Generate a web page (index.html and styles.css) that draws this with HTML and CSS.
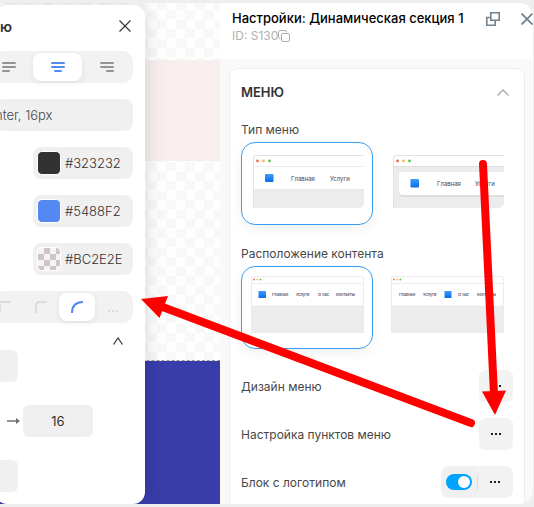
FILE: index.html
```html
<!DOCTYPE html>
<html lang="ru">
<head>
  <meta charset="UTF-8" />
  <meta name="viewport" content="width=device-width, initial-scale=1" />
  <title>Настройки: Динамическая секция 1</title>
  <link rel="stylesheet" href="styles.css">
</head>
<body>
  <div class="editor">
    <div class="canvas">
      <div class="canvas-top"></div>
      <div class="canvas-pink"></div>
      <div class="canvas-empty"></div>
      <div class="canvas-blue"></div>
    </div>

    <section class="popup">
      <header class="popup-header">
        <h2>ю</h2>
        <button class="icon-btn" aria-label="Закрыть">
          <svg width="12" height="12" viewBox="0 0 12 12" stroke="#323232" stroke-width="1.1"><path d="M0.5 0.5L11.5 11.5M11.5 0.5L0.5 11.5"/></svg>
        </button>
      </header>

      <div class="segment">
        <label class="segment-item">
          <input type="radio" name="align" aria-label="По левому краю">
          <svg width="14" height="10" viewBox="0 0 14 10"><path d="M1 1H13M1 5H13M1 9H7"/></svg>
        </label>
        <label class="segment-item">
          <input type="radio" name="align" aria-label="По центру" checked>
          <svg width="14" height="10" viewBox="0 0 14 10"><path d="M1 1H13M1 5H13M4 9H10"/></svg>
        </label>
        <label class="segment-item">
          <input type="radio" name="align" aria-label="По правому краю">
          <svg width="14" height="10" viewBox="0 0 14 10"><path d="M1 1H13M1 5H13M7 9H13"/></svg>
        </label>
      </div>

      <button class="font-btn">nter, 16px</button>

      <button class="color-btn"><span class="swatch swatch-dark"></span>#323232</button>
      <button class="color-btn"><span class="swatch swatch-blue"></span>#5488F2</button>
      <button class="color-btn"><span class="swatch swatch-clear"></span>#BC2E2E</button>

      <div class="segment segment-corners">
        <label class="segment-item corner">
          <input type="radio" name="corner" aria-label="Без скругления">
          <svg width="12" height="12" viewBox="0 0 12 12"><path d="M1 12V1H12"/></svg>
        </label>
        <label class="segment-item corner">
          <input type="radio" name="corner" aria-label="Малое скругление">
          <svg width="12" height="12" viewBox="0 0 12 12"><path d="M1 12V5Q1 1 5 1H12"/></svg>
        </label>
        <label class="segment-item corner">
          <input type="radio" name="corner" aria-label="Большое скругление" checked>
          <svg width="12" height="12" viewBox="0 0 12 12"><path d="M1 12C1 5 5 1 12 1"/></svg>
        </label>
        <label class="segment-item corner">
          <input type="radio" name="corner" aria-label="Другое">
          <svg width="12" height="12" viewBox="0 0 12 12"><path stroke-dasharray="2 2" d="M1 10H11"/></svg>
        </label>
      </div>

      <button class="icon-btn collapse" aria-label="Свернуть">
        <svg width="10" height="8" viewBox="0 0 10 8" fill="none" stroke="#323232" stroke-width="1.2"><path d="M0.5 7.5L5 1L9.5 7.5"/></svg>
      </button>

      <input class="num-input short" type="text" aria-label="Отступ сверху">
      <div class="num-row">
        <svg width="13" height="8" viewBox="0 0 13 8" fill="#707070"><path d="M0 3.2H9V1L13 4L9 7V4.8H0Z"/></svg>
        <input class="num-input" type="text" value="16" aria-label="Отступ справа">
      </div>
      <input class="num-input short" type="text" aria-label="Отступ снизу">
    </section>

    <aside class="panel">
      <header class="panel-header">
        <div class="panel-title">
          <h1>Настройки: Динамическая секция 1</h1>
          <p>ID: S130<button class="icon-btn" aria-label="Копировать">
            <svg width="12" height="12" viewBox="0 0 12 12" fill="none" stroke="#b0b0b0"><rect x="3.5" y="3.5" width="8" height="8" rx="1.5"/><path d="M2.5 8.5H2Q0.5 8.5 0.5 7V2Q0.5 0.5 2 0.5H7Q8.5 0.5 8.5 2V2.5"/></svg>
          </button></p>
        </div>
        <div class="panel-actions">
          <button class="icon-btn" aria-label="Открепить">
            <svg width="14" height="14" viewBox="0 0 14 14" fill="none" stroke="#73828f" stroke-width="1.6"><path d="M4.8 0.8H13.2V8.2H4.8Z"/><path d="M4.5 5.5H0.8V13.2H9.2V8.5"/></svg>
          </button>
          <button class="icon-btn" aria-label="Закрыть">
            <svg width="12" height="12" viewBox="0 0 12 12" stroke="#73828f" stroke-width="1.8"><path d="M0.5 0.5L11.5 11.5M11.5 0.5L0.5 11.5"/></svg>
          </button>
        </div>
      </header>

      <div class="panel-body">
        <section class="card">
          <header class="card-header">
            <h2>МЕНЮ</h2>
            <button class="icon-btn" aria-label="Свернуть">
              <svg width="12" height="7" viewBox="0 0 12 7" fill="none" stroke="#a8a8a8" stroke-width="1.3"><path d="M0.5 6.5L6 1L11.5 6.5"/></svg>
            </button>
          </header>

          <h3>Тип меню</h3>
          <div class="options">
            <label class="option option-type">
              <input type="radio" name="type" aria-label="Обычное меню" checked>
              <svg width="111" height="53" viewBox="0 0 111 53">
                <defs>
                  <linearGradient id="logoFill" x1="0" y1="0" x2="0" y2="1">
                    <stop offset="0" stop-color="#3c9cf8"/>
                    <stop offset="1" stop-color="#0a6fe8"/>
                  </linearGradient>
                </defs>
                <path fill="#ececec" d="M0 30H111V47Q111 53 105 53H0Z"/>
                <path fill="#fff" d="M0 0H111V34.5H0Z"/>
                <path fill="none" stroke="#e2e2e2" d="M0.5 53V3Q0.5 0.5 3 0.5H111"/>
                <path stroke="#ededed" d="M1 11.5H111"/>
                <path stroke="#dfdfdf" stroke-opacity=".6" d="M1 34.5H111"/>
                <circle cx="4.5" cy="6" r="1.4" fill="#ee6a5f"/><circle cx="10.5" cy="6" r="1.4" fill="#f5bd4f"/><circle cx="16.5" cy="6" r="1.4" fill="#61c454"/>
                <rect class="logo" x="12" y="19" width="8.5" height="8" rx="1"/>
                <text x="38" y="26">Главная</text><text x="77" y="26">Услуги</text>
              </svg>
            </label>
            <label class="option option-type">
              <input type="radio" name="type" aria-label="Плавающее меню">
              <svg width="111" height="53" viewBox="0 0 111 53">
                <path fill="#ececec" d="M0 11H111V47Q111 53 105 53H0Z"/>
                <path fill="none" stroke="#e2e2e2" d="M0.5 53V3Q0.5 0.5 3 0.5H111"/>
                <path stroke="#dddddd" d="M1 11.5H111"/>
                <path fill="#dedede" d="M111 18H10Q6 18 6 22V38Q6 42 10 42H111Z"/>
                <path fill="#fff" d="M111 17H10Q6 17 6 21V36Q6 40 10 40H111Z"/>
                <circle cx="4.5" cy="6" r="1.4" fill="#ee6a5f"/><circle cx="10.5" cy="6" r="1.4" fill="#f5bd4f"/><circle cx="16.5" cy="6" r="1.4" fill="#61c454"/>
                <rect class="logo" x="17.5" y="24" width="8.5" height="8.5" rx="1"/>
                <text x="44" y="31">Главная</text><text x="82" y="31">Услуги</text>
              </svg>
            </label>
          </div>

          <h3>Расположение контента</h3>
          <div class="options">
            <label class="option option-layout">
              <input type="radio" name="layout" aria-label="Логотип слева" checked>
              <svg class="small" width="113" height="57" viewBox="0 0 113 57">
                <path fill="#ececec" d="M0 30H113V57H0Z"/>
                <path fill="#fff" stroke="#ececec" d="M0.5 30V2Q0.5 0.5 2 0.5H111Q112.5 0.5 112.5 2V30Z"/>
                <path stroke="#ededed" d="M1 7.5H112"/>
                <circle cx="3" cy="3.5" r="0.9" fill="#ee6a5f"/><circle cx="6.2" cy="3.5" r="0.9" fill="#f5bd4f"/><circle cx="9.4" cy="3.5" r="0.9" fill="#61c454"/>
                <rect class="logo" x="7.5" y="15" width="7.5" height="7" rx="0.5"/>
                <text x="21" y="20">Главная</text><text x="45" y="20">Услуги</text><text x="67" y="20">О нас</text><text x="85" y="20">Контакты</text>
              </svg>
            </label>
            <label class="option option-layout">
              <input type="radio" name="layout" aria-label="Логотип по центру">
              <svg class="small" width="113" height="57" viewBox="0 0 113 57">
                <path fill="#ececec" d="M0 30H113V57H0Z"/>
                <path fill="#fff" stroke="#ececec" d="M0.5 30V2Q0.5 0.5 2 0.5H111Q112.5 0.5 112.5 2V30Z"/>
                <path stroke="#ededed" d="M1 7.5H112"/>
                <circle cx="3" cy="3.5" r="0.9" fill="#ee6a5f"/><circle cx="6.2" cy="3.5" r="0.9" fill="#f5bd4f"/><circle cx="9.4" cy="3.5" r="0.9" fill="#61c454"/>
                <rect class="logo" x="53.5" y="15" width="7" height="7" rx="0.5"/>
                <text x="8" y="20">Главная</text><text x="32" y="20">Услуги</text><text x="67" y="20">О нас</text><text x="86" y="20">Контакты</text>
              </svg>
            </label>
          </div>

          <div class="row">
            <span>Дизайн меню</span>
            <button class="more-btn" aria-label="Дизайн меню"><i></i><i></i><i></i></button>
          </div>
          <div class="row">
            <span>Настройка пунктов меню</span>
            <button class="more-btn" aria-label="Настройка пунктов меню"><i></i><i></i><i></i></button>
          </div>
          <div class="row">
            <label for="logoToggle">Блок с логотипом</label>
            <div class="toggle-group">
              <input class="toggle" type="checkbox" id="logoToggle" checked>
              <button class="more-btn" aria-label="Блок с логотипом"><i></i><i></i><i></i></button>
            </div>
          </div>
        </section>
      </div>
    </aside>
  </div>

  <!-- pointer arrows over the editor -->
  <svg class="arrows" width="534" height="507" viewBox="0 0 534 507">
    <path d="M483 164L494 394M471 423L160 306" stroke="#f00" stroke-width="8" stroke-linecap="round"/>
    <path d="M482 391.500L506 390.500L495 415ZM141 299L168 296L159.500 318Z" fill="#f00"/>
  </svg>
</body>
</html>
```

FILE: styles.css
```css
* {
  box-sizing: border-box;
}

body {
  font-family: Inter, "Liberation Sans", sans-serif;
  font-size: 13px;
  color: #323232;
  background: #eeeeee;
  margin: 0;
  padding: 3px 1px 3px 0;
  height: 100vh;
  overflow: hidden;
  position: relative;
}

h1, h2, h3, p {
  margin: 0;
}

button, input {
  font: inherit;
  color: inherit;
  border: none;
  margin: 0;
  padding: 0;
}

button {
  cursor: pointer;
}

svg {
  display: block;
}

.icon-btn {
  display: flex;
  background: none;
}

.editor {
  display: grid;
  grid-template-columns: 145px 1fr 313px;
  grid-template-rows: 100%;
  height: 100%;
  border-radius: 0 14px 14px 0;
  overflow: hidden;
}

/* canvas */
.canvas {
  grid-column: 1 / 3;
  grid-row: 1;
  display: flex;
  flex-direction: column;
  background: repeating-conic-gradient(#f8f8f8 0 25%, #fefefe 0 50%) 5px 7px / 19px 19px;
}

.canvas-top {
  height: 57px;
}

.canvas-pink {
  height: 101px;
  background: #f8eeee;
}

.canvas-empty {
  height: 200px;
  border-bottom: 1px dashed #999;
}

.canvas-blue {
  flex: 1;
  background: #383da9;
}

/* popup */
.popup {
  grid-column: 1;
  grid-row: 1;
  justify-self: end;
  width: 150px;
  margin-top: 2px;
  padding: 9px 12px 0 0;
  background: #fff;
  border-radius: 12px;
  box-shadow: 0 0 20px rgb(0 0 0 / 0.15);
  display: flex;
  flex-direction: column;
  align-items: flex-end;
  gap: 16px;
}

.popup-header {
  width: 100%;
  height: 24px;
  margin-bottom: -3px;
  padding: 0 2px 0 5px;
  display: flex;
  align-items: center;
  justify-content: space-between;
}

.popup-header h2 {
  font-size: 14px;
  font-weight: 600;
}

.segment {
  width: 100%;
  height: 32px;
  padding: 2px;
  background: #f2f2f2;
  border-radius: 10px;
  display: flex;
  justify-content: flex-end;
}

.segment-item {
  flex: none;
  width: 49px;
  border-radius: 8px;
  display: flex;
  align-items: center;
  justify-content: center;
}

.segment-item input,
.option input {
  appearance: none;
  width: 0;
  height: 0;
}

.segment-item svg {
  fill: none;
  stroke: #949494;
  stroke-width: 2;
  stroke-linecap: round;
}

.segment-item:has(input:checked) {
  background: #fff;
  box-shadow: 0 2px 6px rgb(0 0 0 / 0.08);
}

.segment-item.corner {
  width: 36px;
}

.corner svg {
  stroke: #dcdcdc;
  stroke-linecap: butt;
}

.segment-item input:checked + svg {
  stroke: #5488f2;
}

.font-btn {
  width: 100%;
  height: 32px;
  text-align: left;
  background: #f0f0f0;
  border-radius: 8px;
  font-weight: 300;
  color: #484848;
}

.color-btn {
  width: 100px;
  height: 32px;
  padding: 0 4px;
  background: #f0f0f0;
  border-radius: 8px;
  display: flex;
  align-items: center;
  gap: 4px;
  font-weight: 300;
}

.swatch {
  width: 24px;
  height: 24px;
  border: 1px solid #fff;
  border-radius: 5px;
}

.swatch-dark {
  background: #323232;
}

.swatch-blue {
  background: #5488f2;
}

.swatch-clear {
  background: repeating-conic-gradient(#cbc5c5 0 25%, #f8f3f3 0 50%) 0 0 / 12px 12px;
}

.collapse {
  margin: -2px 10px -11px 0;
}

.num-input {
  width: 70px;
  height: 32px;
  background: #f0f0f0;
  border-radius: 6px;
  text-align: center;
}

.num-input.short {
  width: 23px;
  align-self: flex-start;
}

.num-row {
  align-self: flex-start;
  margin: 7px 0;
  padding-left: 12px;
  display: flex;
  align-items: center;
  gap: 3px;
}

/* settings panel */
.panel {
  grid-column: 3;
  grid-row: 1;
  background: #f9f9f9;
  overflow: hidden;
}

.panel-header {
  height: 56px;
  padding: 6px 0 0 12px;
  background: #fff;
  display: flex;
  justify-content: space-between;
}

.panel-title h1 {
  font-size: 13px;
  font-weight: 500;
  line-height: 18px;
  color: #000;
  white-space: nowrap;
}

.panel-title p {
  display: flex;
  align-items: center;
  font-size: 12px;
  line-height: 18px;
  color: #b0b0b0;
}

.panel-actions {
  height: 20px;
  display: flex;
  align-items: center;
  gap: 21px;
}

.panel-body {
  padding: 9px 8px 0 9px;
}

.card {
  height: 460px;
  padding: 0 11px;
  background: #fff;
  border: 1px solid #eeeeee;
  border-radius: 8px;
}

.card-header {
  height: 46px;
  padding-right: 4px;
  display: flex;
  align-items: center;
  justify-content: space-between;
}

.card-header h2 {
  font-size: 13px;
  font-weight: 600;
}

.card h3 {
  font-size: 12px;
  font-weight: 400;
  line-height: 16px;
  color: #484848;
  margin: 7px 0 4px;
}

.options {
  display: flex;
  gap: 8px;
  margin-bottom: 21px;
}

.option {
  flex: 1;
  height: 83px;
  border: 1px solid transparent;
  border-radius: 14px;
  display: flex;
}

.option:has(input:checked) {
  border-color: #3a9cf0;
  box-shadow: 0 4px 12px rgb(0 0 0 / 0.06);
}

.option-type {
  padding: 12px 0 0 11px;
}

.option-layout {
  padding: 9px 0 0 9px;
}

.option text {
  font-size: 6px;
  fill: #3f4658;
}

.option .small text {
  font-size: 4px;
  font-weight: 500;
}

.logo {
  fill: url(#logoFill);
}

.row {
  height: 32px;
  margin-bottom: 16px;
  display: flex;
  align-items: center;
  justify-content: space-between;
  font-size: 12px;
  color: #484848;
}

.more-btn {
  width: 34px;
  height: 32px;
  background: #f2f2f2;
  border-radius: 6px;
  display: flex;
  align-items: center;
  justify-content: center;
  gap: 2px;
}

.more-btn i {
  width: 2px;
  height: 2px;
  background: #222;
}

.toggle-group {
  padding-left: 5px;
  background: #f0f0f0;
  border-radius: 8px;
  display: flex;
  align-items: center;
  gap: 5px;
}

.toggle-group .more-btn {
  border-radius: 0 8px 8px 0;
}

.toggle-group .more-btn::before {
  content: "";
  width: 1px;
  height: 16px;
  margin-right: 10px;
  background: #dddddd;
}

.toggle-group .more-btn {
  width: 36px;
  justify-content: flex-start;
}

.toggle {
  appearance: none;
  width: 26px;
  height: 16px;
  padding: 2px;
  background: #ccc;
  border-radius: 8px;
  display: flex;
}

.toggle::before {
  content: "";
  width: 12px;
  height: 12px;
  background: #fff;
  border-radius: 50%;
}

.toggle:checked {
  background: #00a2ff;
  justify-content: flex-end;
}

.arrows {
  position: absolute;
  top: 0;
  left: 0;
  pointer-events: none;
}
```
